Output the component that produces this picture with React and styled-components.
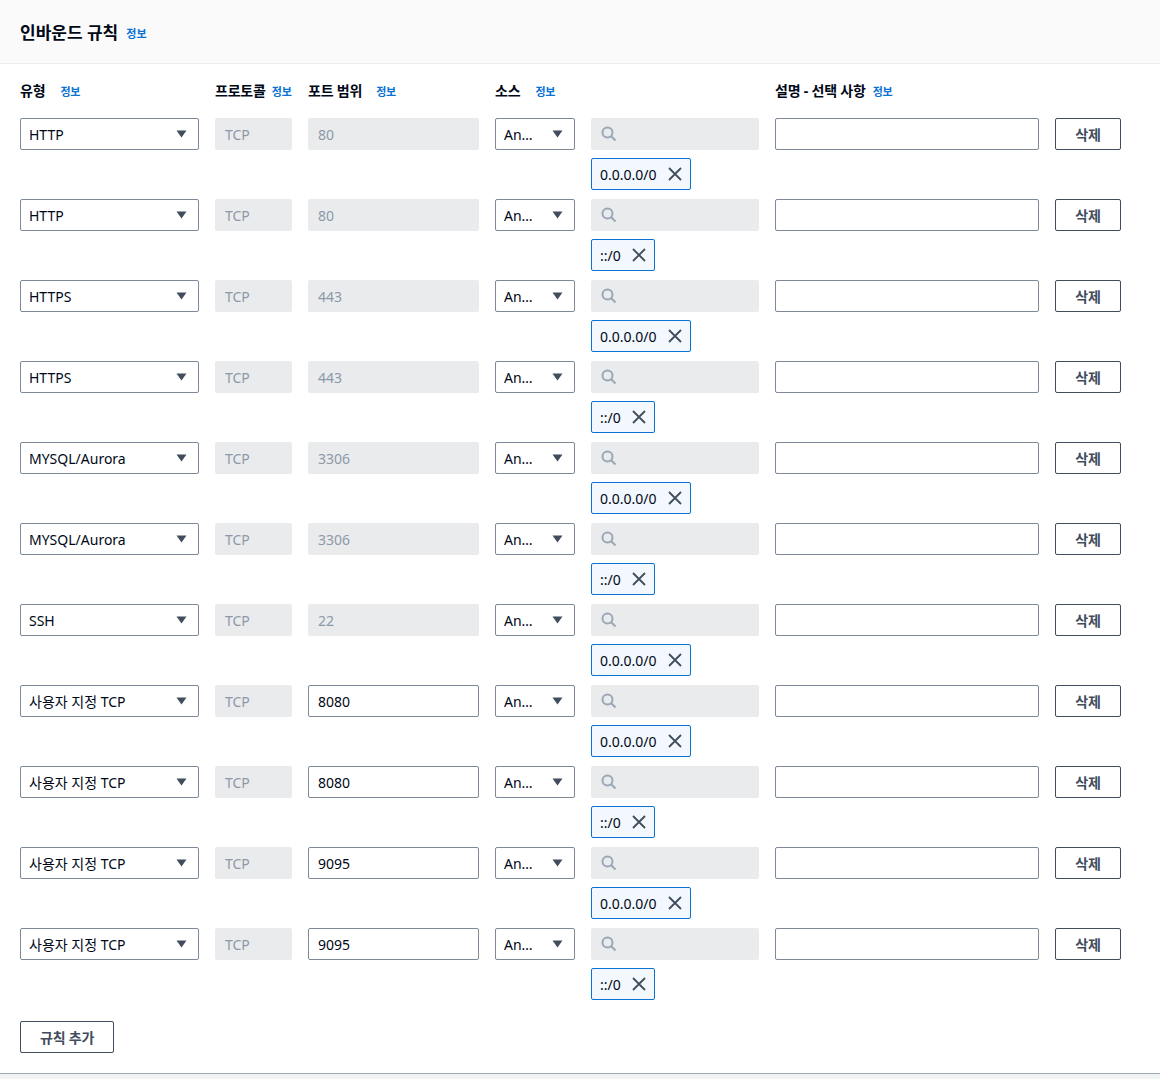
import React from "react";
import styled, { createGlobalStyle } from "styled-components";

const GlobalStyle = createGlobalStyle`
  body {
    margin: 0;
    background: #f2f3f3;
    font-family: "Noto Sans", "Noto Sans CJK KR", sans-serif;
    font-size: 14px;
    color: #000716;
  }
`;

const COLS = "179px 77px 171px 80px 168px 264px 66px";

const Panel = styled.div`
  background: #ffffff;
  border-bottom: 1px solid #9ba7b6;
`;

const Header = styled.div`
  height: 63px;
  background: #fafafa;
  border-bottom: 1px solid #e9ebed;
  display: flex;
  align-items: center;
  padding: 0 20px;
  gap: 8px;
`;

const Title = styled.h2`
  margin: 0;
  font-size: 17px;
  font-weight: 700;
  color: #000716;
`;

const Info = styled.a`
  color: #0972d3;
  font-size: 11px;
  font-weight: 700;
  text-decoration: none;
  margin-left: ${(p) => p.gap || 0}px;
  margin-top: 2px;
`;

const Content = styled.div`
  padding: 15px 20px 20px;
`;

const Grid = styled.div`
  display: grid;
  grid-template-columns: ${COLS};
  column-gap: 16px;
`;

const HeadRow = styled(Grid)`
  height: 22px;
  align-items: center;
  margin-bottom: 17px;
`;

const Label = styled.div`
  display: flex;
  align-items: center;
  font-weight: 700;
  font-size: 14px;
  letter-spacing: -0.2px;
  white-space: nowrap;
  grid-column: ${(p) => p.col || "auto"};
`;

const Rules = styled.div`
  display: flex;
  flex-direction: column;
  gap: 9px;
`;

const RuleRow = styled(Grid)`
  row-gap: 8px;
  grid-template-rows: 32px 32px;
`;

const fieldBase = `
  box-sizing: border-box;
  height: 32px;
  border-radius: 2px;
  display: flex;
  align-items: center;
  font-size: 14px;
  overflow: hidden;
  white-space: nowrap;
`;

const Select = styled.div`
  ${fieldBase}
  border: 1px solid #7d8998;
  background: #fff;
  padding: 0 11px 0 8px;
  justify-content: space-between;
  color: #000716;
`;

const Caret = () => (
  <svg width="11" height="8" viewBox="0 0 11 8">
    <path d="M0.5 0.5 H10.5 L5.5 7.5 Z" fill="#414d5c" />
  </svg>
);

const Field = styled.div`
  ${fieldBase}
  padding: 0 9px;
  border: 1px solid ${(p) => (p.disabled ? "#e9ebed" : "#7d8998")};
  background: ${(p) => (p.disabled ? "#e9ebed" : "#fff")};
  color: ${(p) => (p.disabled ? "#8d99a8" : "#000716")};
`;

const SearchIcon = () => (
  <svg width="16" height="16" viewBox="0 0 16 16" fill="none">
    <circle cx="6.5" cy="6.5" r="5" stroke="#9ba7b6" strokeWidth="2" />
    <path d="M10.2 10.2 L14.5 14.5" stroke="#9ba7b6" strokeWidth="2" />
  </svg>
);

const Token = styled.div`
  ${fieldBase}
  grid-column: 5;
  grid-row: 2;
  justify-self: start;
  padding: 0 8px;
  gap: 11px;
  background: #f2f8fd;
  border: 1px solid #0972d3;
  color: #000716;
`;

const CloseIcon = () => (
  <svg width="14" height="14" viewBox="0 0 14 14" fill="none">
    <path d="M1 1 L13 13 M13 1 L1 13" stroke="#414d5c" strokeWidth="1.8" />
  </svg>
);

const Button = styled.button`
  box-sizing: border-box;
  height: 32px;
  width: ${(p) => p.w || "auto"};
  border: 1px solid #414d5c;
  border-radius: 2px;
  background: #fff;
  color: #414d5c;
  font-family: inherit;
  font-size: 14px;
  font-weight: 700;
  letter-spacing: -0.2px;
  white-space: nowrap;
  padding: 0 ${(p) => (p.w ? 0 : 19)}px;
  cursor: pointer;
`;

const AddWrap = styled.div`
  margin-top: 21px;
`;

const rules = [
  { type: "HTTP", port: "80", src: "0.0.0.0/0" },
  { type: "HTTP", port: "80", src: "::/0" },
  { type: "HTTPS", port: "443", src: "0.0.0.0/0" },
  { type: "HTTPS", port: "443", src: "::/0" },
  { type: "MYSQL/Aurora", port: "3306", src: "0.0.0.0/0" },
  { type: "MYSQL/Aurora", port: "3306", src: "::/0" },
  { type: "SSH", port: "22", src: "0.0.0.0/0" },
  { type: "사용자 지정 TCP", port: "8080", src: "0.0.0.0/0", editable: true },
  { type: "사용자 지정 TCP", port: "8080", src: "::/0", editable: true },
  { type: "사용자 지정 TCP", port: "9095", src: "0.0.0.0/0", editable: true },
  { type: "사용자 지정 TCP", port: "9095", src: "::/0", editable: true },
];

export default function App() {
  return (
    <>
      <GlobalStyle />
      <Panel>
        <Header>
          <Title>인바운드 규칙</Title>
          <Info href="#">정보</Info>
        </Header>
        <Content>
          <HeadRow>
            <Label>
              유형<Info gap={15}>정보</Info>
            </Label>
            <Label>
              프로토콜<Info gap={6}>정보</Info>
            </Label>
            <Label>
              포트 범위<Info gap={14}>정보</Info>
            </Label>
            <Label>
              소스<Info gap={15}>정보</Info>
            </Label>
            <Label col="6">
              설명 - 선택 사항<Info gap={7}>정보</Info>
            </Label>
          </HeadRow>
          <Rules>
            {rules.map((r, i) => (
              <RuleRow key={i}>
                <Select>
                  <span>{r.type}</span>
                  <Caret />
                </Select>
                <Field disabled>TCP</Field>
                <Field disabled={!r.editable}>{r.port}</Field>
                <Select>
                  <span>An…</span>
                  <Caret />
                </Select>
                <Field disabled>
                  <SearchIcon />
                </Field>
                <Field />
                <Button w="66px">삭제</Button>
                <Token>
                  {r.src}
                  <CloseIcon />
                </Token>
              </RuleRow>
            ))}
          </Rules>
          <AddWrap>
            <Button>규칙 추가</Button>
          </AddWrap>
        </Content>
      </Panel>
    </>
  );
}
